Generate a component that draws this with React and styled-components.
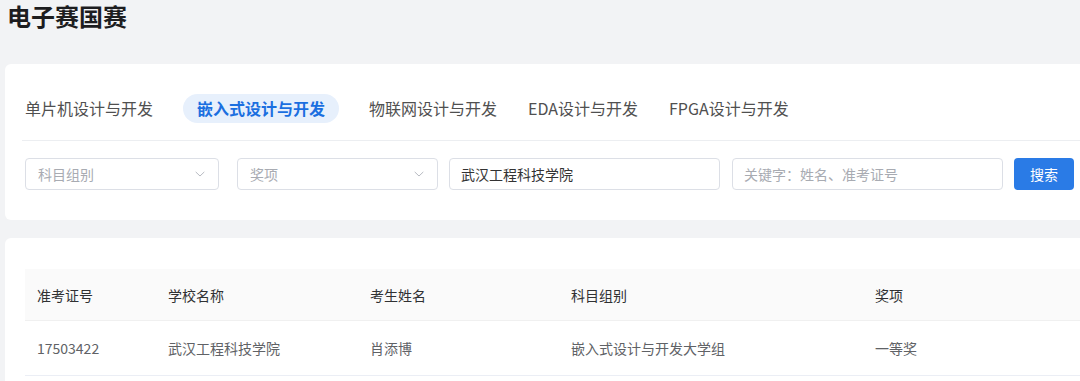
import React, { useState } from 'react'
import styled, { createGlobalStyle } from 'styled-components'

const GlobalStyle = createGlobalStyle`
    html, body {
        margin: 0;
        padding: 0;
        background: #f2f3f5;
        overflow: hidden;
    }
    body {
        font-family: "Noto Sans CJK SC", "Noto Sans", sans-serif;
        color: #333;
    }
    * {
        box-sizing: border-box;
    }
`

const tabs = ['单片机设计与开发', '嵌入式设计与开发', '物联网设计与开发', 'EDA设计与开发', 'FPGA设计与开发']

const columns = [
    { title: '准考证号', width: 131 },
    { title: '学校名称', width: 202 },
    { title: '考生姓名', width: 201 },
    { title: '科目组别', width: 304 },
    { title: '奖项', width: 230 },
]

const rows = [
    ['17503422', '武汉工程科技学院', '肖添博', '嵌入式设计与开发大学组', '一等奖'],
]

const Chevron = () => (
    <svg width="12" height="12" viewBox="0 0 12 12" fill="none">
        <path d="M2 4.2L6 8L10 4.2" stroke="#b8bbc2" strokeWidth="1" strokeLinecap="round" strokeLinejoin="round" />
    </svg>
)

const App = () => {
    const [active, setActive] = useState(1)
    const [school, setSchool] = useState('武汉工程科技学院')

    return (
        <Page>
            <GlobalStyle />
            <Title>电子赛国赛</Title>

            <Card gapTop={30} padTop={30} padBottom={30}>
                <Tabs>
                    {tabs.map((t, i) => (
                        <Tab key={t} active={i === active} onClick={() => setActive(i)}>{t}</Tab>
                    ))}
                </Tabs>
                <Divider />
                <Filters>
                    <Select width={194}>
                        <span>科目组别</span>
                        <Chevron />
                    </Select>
                    <Select width={201} gapBefore={18}>
                        <span>奖项</span>
                        <Chevron />
                    </Select>
                    <Input width={271} gapBefore={11} value={school} onChange={e => setSchool(e.target.value)} />
                    <Input width={271} gapBefore={12} placeholder="关键字：姓名、准考证号" />
                    <SearchButton type="button">搜索</SearchButton>
                </Filters>
            </Card>

            <Card gapTop={18} padTop={31} padBottom={24}>
                <Table>
                    <HeadRow>
                        {columns.map(c => (
                            <HeadCell key={c.title} width={c.width}>{c.title}</HeadCell>
                        ))}
                    </HeadRow>
                    {rows.map(r => (
                        <Row key={r[0]}>
                            {r.map((v, i) => (
                                <Cell key={i} width={columns[i].width}>{v}</Cell>
                            ))}
                        </Row>
                    ))}
                </Table>
            </Card>
        </Page>
    )
}

export default App

const Page = styled.div`
    width: 1080px;
    height: 381px;
    padding-left: 5px;
`

const Title = styled.h1`
    margin: 0;
    padding: 0 0 0 2px;
    height: 34px;
    font-size: 24px;
    line-height: 32px;
    font-weight: 700;
    color: #1d1d1f;
`

const Card = styled.div`
    margin-top: ${p => p.gapTop}px;
    background: #fff;
    border-radius: 6px 0 0 6px;
    padding: ${p => p.padTop}px 0 ${p => p.padBottom}px 20px;
`

const Tabs = styled.div`
    display: flex;
    align-items: center;
    gap: 31px;
    height: 29px;
`

const Tab = styled.div`
    height: 29px;
    line-height: 29px;
    font-size: 16px;
    white-space: nowrap;
    cursor: pointer;
    border-radius: 15px;
    padding: ${p => (p.active ? '0 14px' : '0')};
    margin: ${p => (p.active ? '0 -1px' : '0')};
    background: ${p => (p.active ? '#e7f0fc' : 'transparent')};
    color: ${p => (p.active ? '#1b6fe0' : '#505050')};
    font-weight: ${p => (p.active ? 700 : 400)};
`

const Divider = styled.div`
    height: 1px;
    background: #eceef1;
    margin: 17px 0 17px -3px;
`

const Filters = styled.div`
    display: flex;
    align-items: center;
`

const Select = styled.div`
    width: ${p => p.width}px;
    margin-left: ${p => p.gapBefore || 0}px;
    height: 32px;
    border: 1px solid #dcdfe6;
    border-radius: 4px;
    padding: 0 12px;
    display: flex;
    align-items: center;
    justify-content: space-between;
    font-size: 14px;
    color: #a8abb2;
`

const Input = styled.input`
    width: ${p => p.width}px;
    margin-left: ${p => p.gapBefore || 0}px;
    height: 32px;
    border: 1px solid #dcdfe6;
    border-radius: 4px;
    padding: 0 11px;
    font-family: inherit;
    font-size: 14px;
    color: #333;
    outline: none;
    &::placeholder {
        color: #a8abb2;
    }
`

const SearchButton = styled.button`
    margin-left: 11px;
    width: 60px;
    height: 32px;
    border: none;
    border-radius: 4px;
    background: #2a7be6;
    color: #fff;
    font-family: inherit;
    font-size: 14px;
    font-weight: 400;
    cursor: pointer;
`

const Table = styled.div`
    display: flex;
    flex-direction: column;
`

const HeadRow = styled.div`
    display: flex;
    height: 52px;
    align-items: center;
    background: #fafafa;
    border-bottom: 1px solid #f0f0f0;
`

const Row = styled.div`
    display: flex;
    height: 55px;
    align-items: center;
    border-bottom: 1px solid #ebeef5;
`

const HeadCell = styled.div`
    width: ${p => p.width}px;
    flex-shrink: 0;
    padding: 0 12px;
    font-size: 14px;
    font-weight: 400;
    color: #303133;
`

const Cell = styled.div`
    width: ${p => p.width}px;
    flex-shrink: 0;
    padding: 0 12px;
    font-size: 14px;
    color: #606266;
`
